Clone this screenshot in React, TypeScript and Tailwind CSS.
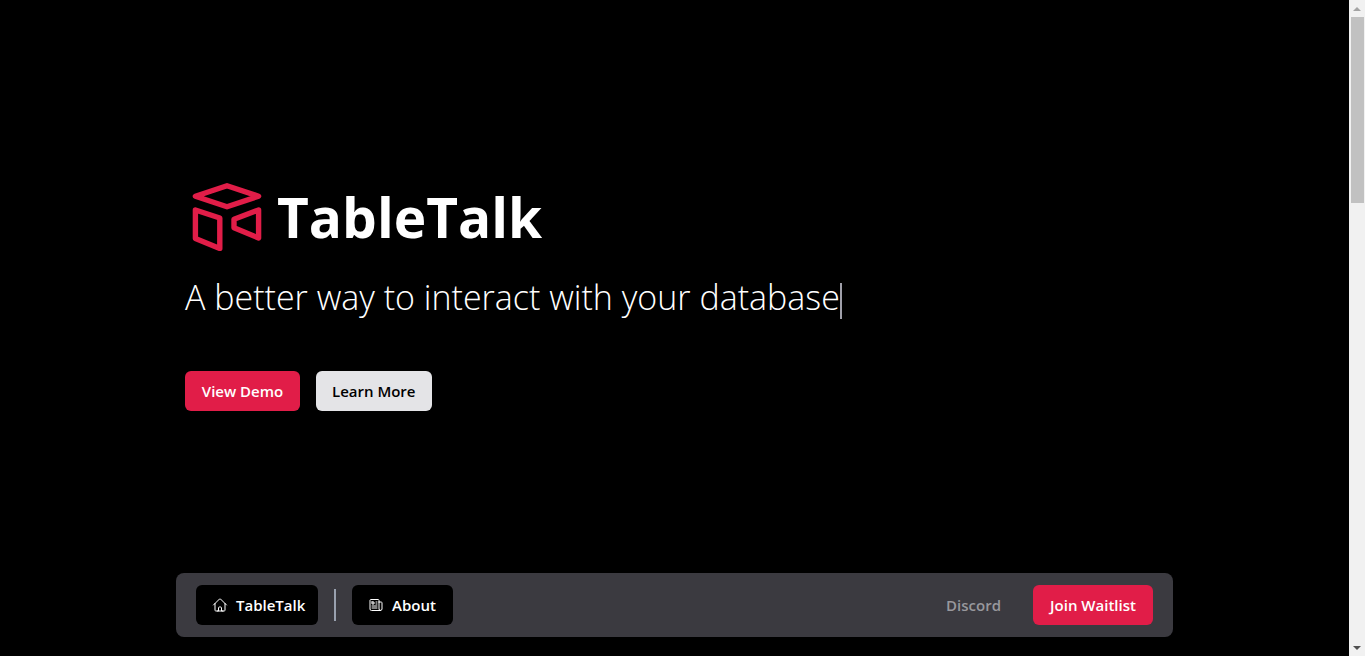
import { HiOutlineHome, HiOutlineNewspaper } from 'react-icons/hi2';

function Logo() {
  return (
    <svg
      viewBox="0 0 84 84"
      className="size-[84px] shrink-0"
      fill="none"
      stroke="#e11d48"
      strokeWidth="5.4"
      strokeLinejoin="round"
      aria-hidden="true"
    >
      <path d="M42 10.7 73.6 21.2 42 31.7 10.4 21.2Z" />
      <path d="M10.4 35 34.8 43 34.8 73.4 10.4 63.6Z" />
      <path d="M73.6 35 49 44.2 49 52.8 73.6 63Z" />
    </svg>
  );
}

function Hero() {
  return (
    <main className="flex flex-1 flex-col items-start pt-[175px]">
      <div className="flex items-center gap-2">
        <Logo />
        <h1 className="text-[55px] leading-[84px] font-bold text-white">
          TableTalk
        </h1>
      </div>
      <p className="mt-4 flex items-end text-[34px] leading-[44px] font-light text-white">
        A better way to interact with your database
        <span className="h-9 w-0.5 bg-zinc-400" aria-hidden="true" />
      </p>
      <div className="mt-[52px] flex gap-4 text-[15px] font-semibold whitespace-nowrap">
        <button
          type="button"
          className="h-10 min-w-[115px] rounded-md bg-[#e11d48] px-4 text-white"
        >
          View Demo
        </button>
        <button
          type="button"
          className="h-10 min-w-[115px] rounded-md bg-zinc-200 px-4 text-black"
        >
          Learn More
        </button>
      </div>
    </main>
  );
}

function NavBar() {
  return (
    <nav
      aria-label="Main"
      className="mb-[19px] flex h-16 items-center justify-between rounded-lg bg-[#3b3a40] px-5 text-[15px] font-semibold whitespace-nowrap"
    >
      <div className="flex items-center gap-4">
        <a
          href="#home"
          className="flex h-10 w-[122px] items-center gap-2 rounded-md bg-black pl-4 text-white"
        >
          <HiOutlineHome className="size-4 shrink-0" />
          TableTalk
        </a>
        <span className="h-8 w-0.5 bg-gray-400" aria-hidden="true" />
        <a
          href="#about"
          className="flex h-10 w-[101px] items-center gap-2 rounded-md bg-black pl-4 text-white"
        >
          <HiOutlineNewspaper className="size-4 shrink-0" />
          About
        </a>
      </div>
      <div className="flex items-center gap-8">
        <a href="#discord" className="text-[#98989d]">
          Discord
        </a>
        <button
          type="button"
          className="h-10 min-w-[120px] rounded-md bg-[#e11d48] px-4 text-white"
        >
          Join Waitlist
        </button>
      </div>
    </nav>
  );
}

function ScrollTrack() {
  return (
    <div
      className="flex w-4 shrink-0 flex-col items-center bg-[#f1f1f1]"
      aria-hidden="true"
    >
      <svg viewBox="0 0 16 17" className="h-[17px] w-4" fill="#a3a3a3">
        <path d="M8 7 12 11H4Z" />
      </svg>
      <div className="h-[186px] w-[13px] bg-[#c1c1c1]" />
      <svg viewBox="0 0 16 17" className="mt-auto h-[17px] w-4" fill="#505050">
        <path d="M4 7H12L8 11Z" />
      </svg>
    </div>
  );
}

export default function App() {
  return (
    <div className="flex h-screen bg-black font-['Open_Sans','Noto_Sans',sans-serif]">
      <div className="flex flex-1 justify-center">
        <div className="flex w-full max-w-[997px] flex-col">
          <div className="flex flex-1 flex-col px-[9px]">
            <Hero />
          </div>
          <NavBar />
        </div>
      </div>
      <ScrollTrack />
    </div>
  );
}
